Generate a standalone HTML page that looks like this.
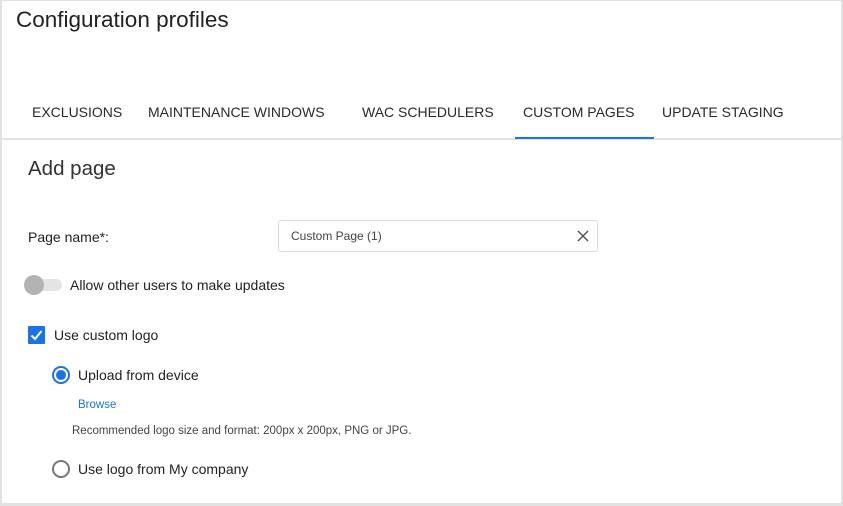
<!DOCTYPE html>
<html><head><style>
*{margin:0;padding:0;box-sizing:border-box}
body{width:843px;height:506px;background:#fff;font-family:"Liberation Sans",sans-serif;position:relative;overflow:hidden;color:#222}
.frame{position:absolute;left:0;top:0;width:843px;height:506px;border:2px solid #e2e2e2;border-top-width:1px;border-bottom-width:3px}
.line{position:absolute;left:2px;right:2px;top:138px;height:2px;background:#e2e2e2}
.t{position:absolute;white-space:nowrap}
.tab{position:absolute;top:104px;font-size:14px;color:#2a2a2a}
.ul{position:absolute;left:515px;top:137px;width:139px;height:2px;background:#1a73e8}
.input{position:absolute;left:278px;top:220px;width:320px;height:32px;border:1px solid #dcdcdc;border-radius:3px}
</style></head><body>
<div class="frame"></div>
<div class="line"></div>
<div class="t" style="left:16px;top:7px;font-size:22.5px;color:#222">Configuration profiles</div>
<div class="tab" style="left:32px">EXCLUSIONS</div>
<div class="tab" style="left:148px">MAINTENANCE WINDOWS</div>
<div class="tab" style="left:362px">WAC SCHEDULERS</div>
<div class="tab" style="left:523px">CUSTOM PAGES</div>
<div class="tab" style="left:662px">UPDATE STAGING</div>
<div class="ul"></div>
<div class="t" style="left:28px;top:157px;font-size:20.5px;color:#333">Add page</div>
<div class="t" style="left:28px;top:229px;font-size:14px">Page name*:</div>
<div class="input">
<div class="t" style="left:12px;top:8px;font-size:12px;color:#444">Custom Page (1)</div>
<svg style="position:absolute;left:298px;top:9px" width="12" height="12" viewBox="0 0 12 12"><path d="M1 1L11 11M11 1L1 11" stroke="#555" stroke-width="1.5"/></svg>
</div>
<div style="position:absolute;left:28px;top:279px;width:34px;height:12px;border-radius:6px;background:#e4e4e4"></div>
<div style="position:absolute;left:24px;top:275px;width:20px;height:20px;border-radius:50%;background:#b3b3b3"></div>
<div class="t" style="left:70px;top:277px;font-size:14px">Allow other users to make updates</div>
<div style="position:absolute;left:28px;top:326px;width:17px;height:18px;background:#1a73e8;border-radius:1px"></div>
<svg style="position:absolute;left:28px;top:326px" width="17" height="18" viewBox="0 0 17 18"><path d="M3.5 9.5L7 13L13.5 5" stroke="#fff" stroke-width="2" fill="none"/></svg>
<div class="t" style="left:54px;top:327px;font-size:14px">Use custom logo</div>
<div style="position:absolute;left:52px;top:366px;width:18px;height:18px;border-radius:50%;border:2px solid #1a73e8"></div>
<div style="position:absolute;left:56px;top:370px;width:10px;height:10px;border-radius:50%;background:#1a73e8"></div>
<div class="t" style="left:78px;top:367px;font-size:14px">Upload from device</div>
<div class="t" style="left:78px;top:399px;font-size:11.5px;color:#1a73e8">Browse</div>
<div class="t" style="left:72px;top:425px;font-size:11.5px;color:#444">Recommended logo size and format: 200px x 200px, PNG or JPG.</div>
<div style="position:absolute;left:52px;top:460px;width:18px;height:18px;border-radius:50%;border:2px solid #777"></div>
<div class="t" style="left:78px;top:461px;font-size:14px">Use logo from My company</div>
</body></html>
